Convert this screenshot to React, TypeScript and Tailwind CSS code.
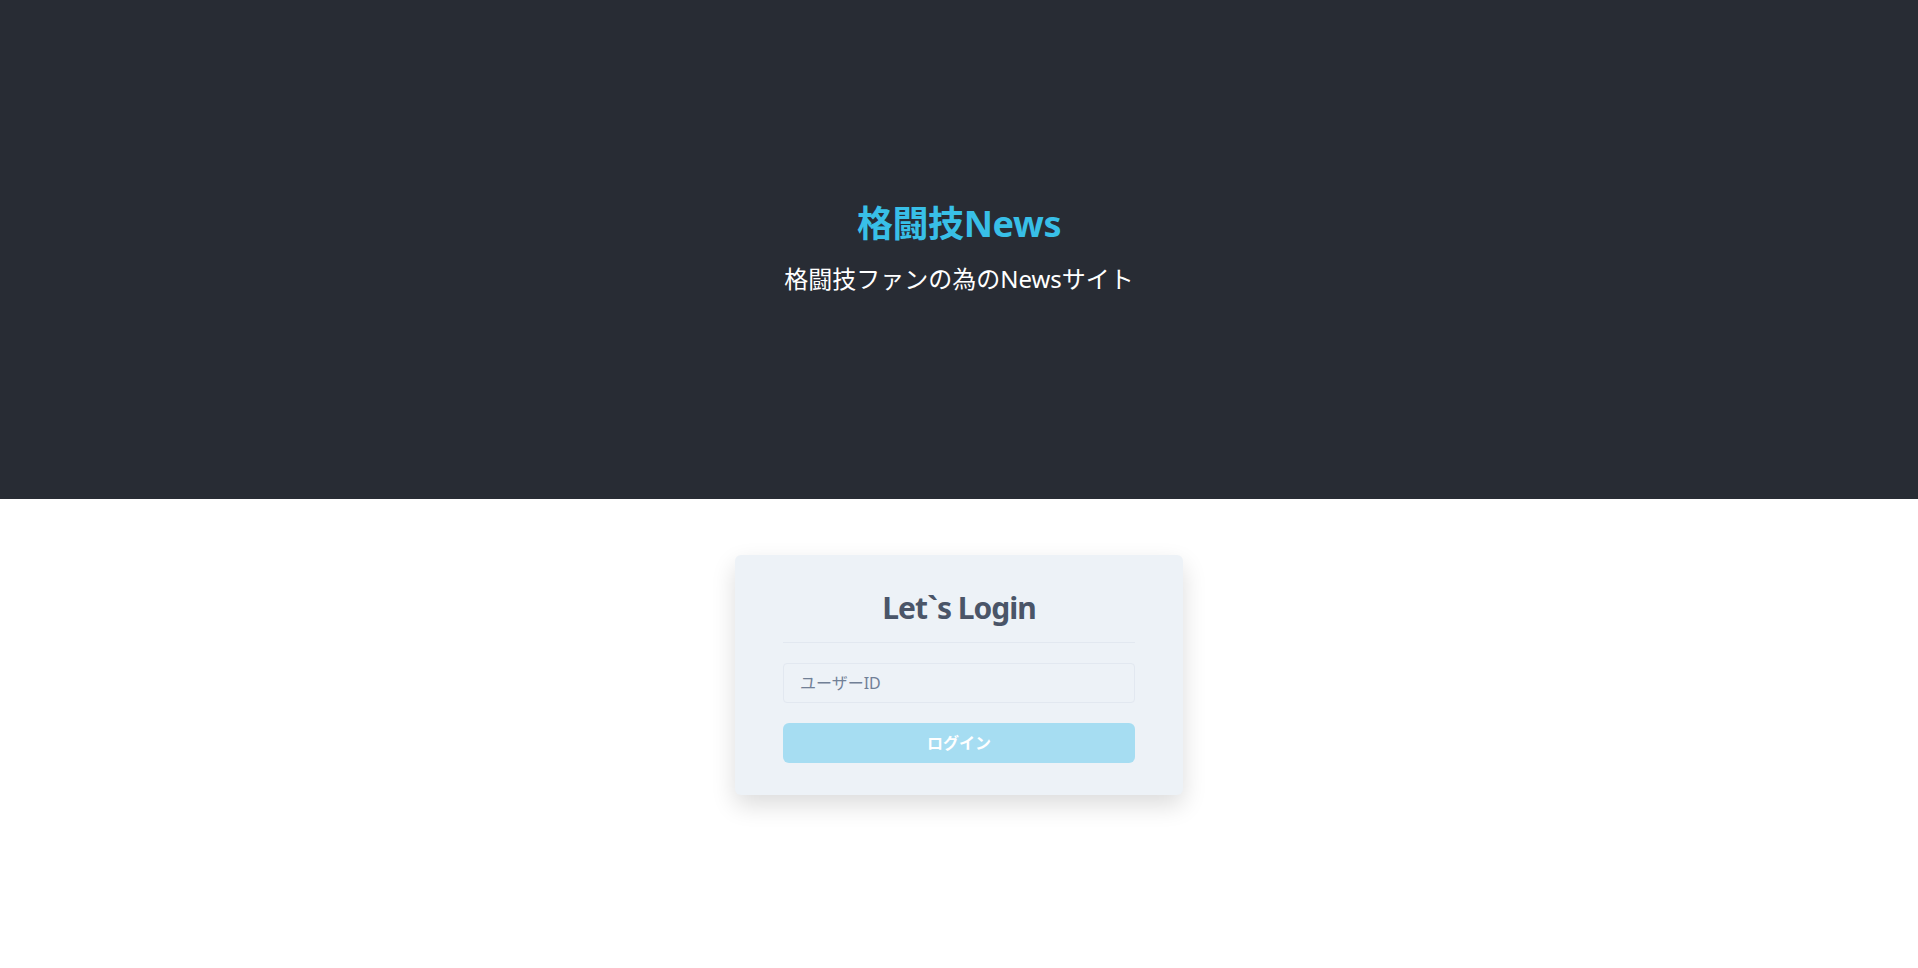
export default function App() {
   return (
      <div
         className="min-h-[968px] bg-white"
         style={{ fontFamily: '"Noto Sans", "Noto Sans CJK JP", sans-serif' }}
      >
         <header className="flex h-[499px] flex-col items-center justify-center bg-[#282c34]">
            <h1 className="text-4xl font-bold leading-10 tracking-[-0.4px] text-[#38bfe7]">格闘技News</h1>
            <p className="mt-[19px] text-2xl leading-8 text-white">格闘技ファンの為のNewsサイト</p>
         </header>
         <main className="flex justify-center">
            <div className="mt-14 w-[448px] rounded-md bg-[#edf2f7] px-12 pb-8 pt-[35px] shadow-[0_10px_25px_rgba(0,0,0,0.14)]">
               <h2 className="border-b border-[#e2e8f0] pb-4 text-center text-3xl font-bold leading-9 tracking-[-1px] text-[#4a5568]">
                  Let`s Login
               </h2>
               <input
                  type="text"
                  placeholder="ユーザーID"
                  className="mt-5 block h-10 w-full rounded border border-[#e2e8f0] bg-[#edf2f7] px-4 text-base text-[#4a5568] outline-none placeholder:text-[#718096]"
               />
               <button className="mt-5 block h-10 w-full rounded-md bg-[#a6ddf2] text-base font-bold text-white">
                  ログイン
               </button>
            </div>
         </main>
      </div>
   );
}
